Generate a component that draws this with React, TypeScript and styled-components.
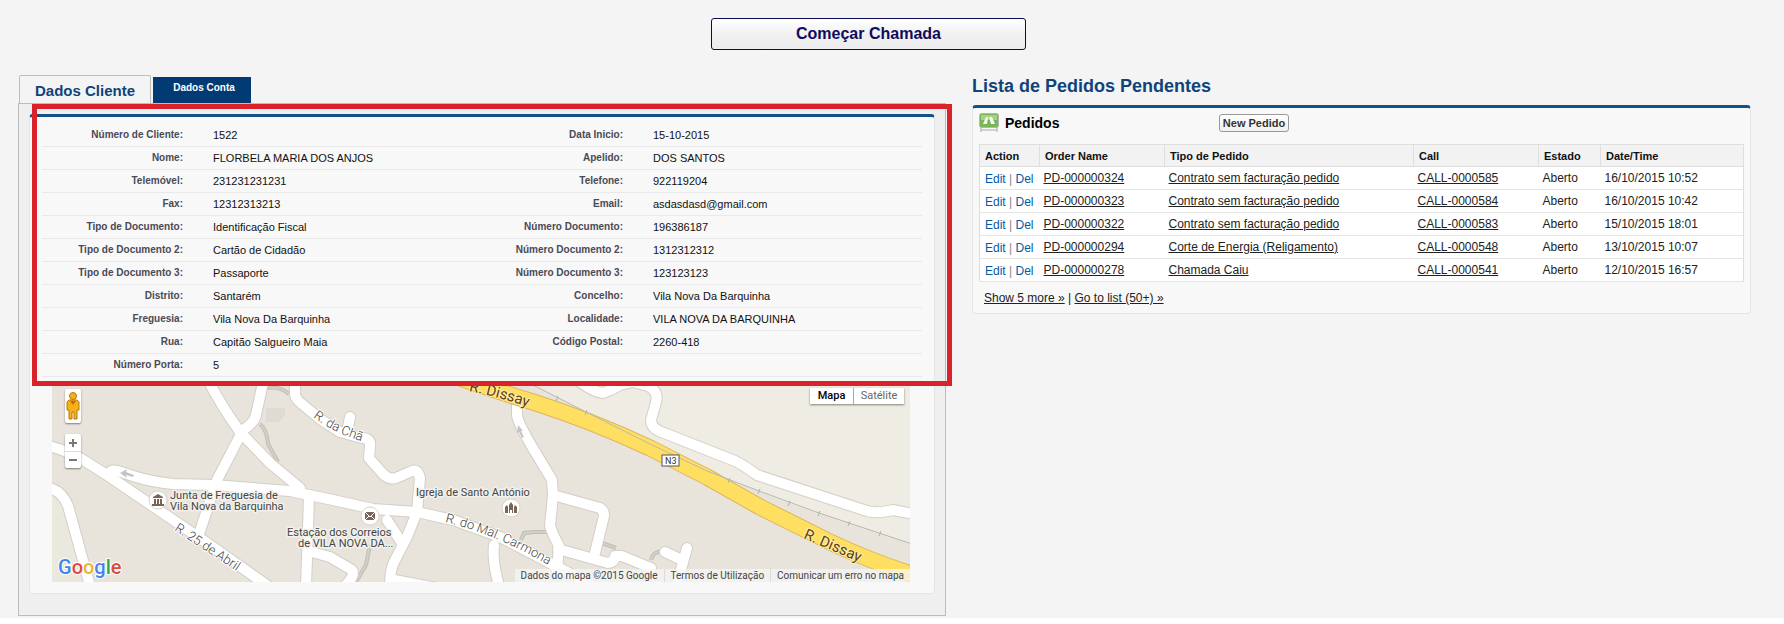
import React from "react";
import styled, { createGlobalStyle } from "styled-components";

const Global = createGlobalStyle`
  *, *::before, *::after { box-sizing: border-box; }
  body { margin: 0; background: #fff; font-family: "Liberation Sans", Arial, sans-serif; color: #222; }
  a { color: inherit; }
  h1, h2, p, dl, dd, dt { margin: 0; }
`;

const Page = styled.main`
  background: #f4f4f4;
  padding: 18px 33px 2px 18px;
`;

const CallBar = styled.div`
  display: flex;
  justify-content: center;
  padding-right: 32px;
`;

const CallButton = styled.button`
  width: 315px;
  height: 32px;
  border: 1px solid #0b0b55;
  border-radius: 3px;
  background: linear-gradient(#fff, #f1f1f1 50%, #ececee);
  color: #100b5c;
  font: bold 16px/20px "Liberation Sans", Arial, sans-serif;
  padding: 0 0 1px;
`;

const Columns = styled.div`
  display: grid;
  grid-template-columns: minmax(0, 928fr) minmax(0, 779fr);
  gap: 26px;
  padding-top: 25px;
  align-items: start;
`;

const Tabs = styled.div`
  display: flex;
  align-items: flex-end;
  gap: 2px;
  height: 28px;
  padding-left: 1px;
`;

const Tab = styled.button<{ $active?: boolean }>`
  height: ${(p) => (p.$active ? 28 : 26)}px;
  width: ${(p) => (p.$active ? 132 : 98)}px;
  border: ${(p) => (p.$active ? "1px solid #bdbdbd" : "0")};
  border-bottom: 0;
  border-radius: ${(p) => (p.$active ? "2px 2px 0 0" : "0")};
  background: ${(p) => (p.$active ? "#f4f4f4" : "#023b73")};
  color: ${(p) => (p.$active ? "#10437a" : "#fff")};
  font: bold ${(p) => (p.$active ? 15 : 10)}px/16px "Liberation Sans", Arial, sans-serif;
  padding: ${(p) => (p.$active ? "2px 0 0" : "0 0 4px 4px")};
`;

const TabPanel = styled.section`
  position: relative;
  border: 1px solid #bcbcbc;
  background: #efefef;
  padding: 10px 10px 21px;
`;

const Highlight = styled.div`
  position: absolute;
  top: 0;
  left: 13px;
  right: -7px;
  height: 282px;
  border: 5px solid #da222b;
  pointer-events: none;
`;

const Card = styled.div`
  border: 1px solid #e6e6e6;
  border-top: 3px solid #125287;
  border-radius: 4px;
  background: #f8f8f8;
`;

const DetailCard = styled(Card)`
  padding: 7px 12px 11px;
`;

const Fields = styled.dl``;

const FieldRow = styled.div`
  display: grid;
  grid-template-columns: 141px minmax(0, 299fr) 141px minmax(0, 299fr);
  height: 23px;
  border-bottom: 1px solid #e9e9e9;
  align-items: center;
`;

const FieldName = styled.dt`
  color: #4a4a56;
  font-size: 10px;
  font-weight: bold;
  line-height: 12px;
  text-align: right;
`;

const FieldValue = styled.dd`
  color: #111;
  font-size: 11px;
  line-height: 14px;
  padding-left: 30px;
`;

const MapBox = styled.div`
  position: relative;
  height: 201px;
  margin: 4px 12px 0 10px;
  overflow: hidden;
  background: #e8e4dc;
  font-family: Roboto, sans-serif;
`;

const MapDrawing = styled.svg`
  display: block;
  width: 100%;
  height: 100%;
  font-family: Roboto, sans-serif;
`;

const MapControls = styled.div`
  position: absolute;
  top: 8px;
  left: 13px;
  display: grid;
  gap: 11px;
`;

const ControlCard = styled.div`
  width: 16px;
  border-radius: 2px;
  background: #fff;
  box-shadow: 0 1px 2px rgba(0, 0, 0, 0.45);
`;

const ControlButton = styled.button<{ $tall?: boolean }>`
  display: flex;
  align-items: center;
  justify-content: center;
  width: 16px;
  height: ${(p) => (p.$tall ? 34 : 17)}px;
  border: 0;
  padding: 0;
  background: none;
  & + & { border-top: 1px solid #ddd; }
`;

const MapTypes = styled.div`
  position: absolute;
  top: 7px;
  right: 6px;
  display: flex;
  background: #fff;
  box-shadow: 0 1px 2px rgba(0, 0, 0, 0.45);
`;

const MapType = styled.button<{ $on?: boolean }>`
  height: 16px;
  width: ${(p) => (p.$on ? 43 : 51)}px;
  border: 0;
  border-left: ${(p) => (p.$on ? "0" : "1px solid #aaa")};
  padding: 0;
  background: #fff;
  color: ${(p) => (p.$on ? "#000" : "#666")};
  font: ${(p) => (p.$on ? 500 : 400)} 11px/16px Roboto, sans-serif;
`;

const MapFooter = styled.div`
  position: absolute;
  right: 0;
  bottom: 0;
  display: flex;
  background: rgba(245, 245, 245, 0.75);
  color: #444;
  font-size: 10px;
  line-height: 13px;
  & > * { padding: 0 6px; text-decoration: none; }
  & > * + * { border-left: 1px solid #dcdcdc; }
`;

const Heading = styled.h1`
  color: #10437a;
  font-size: 18px;
  line-height: 22px;
  height: 30px;
`;

const OrdersCard = styled(Card)`
  padding: 0 6px 7px;
`;

const OrdersHead = styled.div`
  display: grid;
  grid-template-columns: 240px auto;
  justify-content: start;
  align-items: center;
  height: 36px;
  padding-bottom: 6px;
`;

const OrdersTitle = styled.h2`
  display: flex;
  align-items: center;
  gap: 6px;
  color: #000;
  font-size: 14px;
  line-height: 20px;
`;

const NewButton = styled.button`
  height: 18px;
  width: 70px;
  padding: 0;
  border: 1px solid #999;
  border-radius: 3px;
  background: linear-gradient(#fff, #f0f0f0);
  color: #333;
  font: bold 11px/16px "Liberation Sans", Arial, sans-serif;
`;

const Orders = styled.table`
  width: 100%;
  table-layout: fixed;
  border-collapse: collapse;
  border: 1px solid #dedede;
  background: #fff;
  font-size: 12px;
  line-height: 14px;
  th {
    height: 22px;
    padding: 0 0 0 5px;
    border: 1px solid #dedede;
    background: #f2f2f2;
    color: #111;
    font-size: 11px;
    text-align: left;
  }
  td {
    height: 23px;
    padding: 0 0 1px 4px;
    border-bottom: 1px solid #e4e4e4;
    white-space: nowrap;
  }
`;

const Col = styled.col<{ $w?: number }>`
  width: ${(p) => (p.$w ? `${p.$w}px` : "auto")};
`;

const Actions = styled.td`
  && { padding: 1px 0 0 5px; color: #888; }
  a { color: #015ba7; text-decoration: none; }
`;

const More = styled.p`
  padding: 8px 5px 0;
  font-size: 12px;
  line-height: 16px;
`;

const fields: [string, string, string?, string?][] = [
  ["Número de Cliente:", "1522", "Data Inicio:", "15-10-2015"],
  ["Nome:", "FLORBELA MARIA DOS ANJOS", "Apelido:", "DOS SANTOS"],
  ["Telemóvel:", "231231231231", "Telefone:", "922119204"],
  ["Fax:", "12312313213", "Email:", "asdasdasd@gmail.com"],
  ["Tipo de Documento:", "Identificação Fiscal", "Número Documento:", "196386187"],
  ["Tipo de Documento 2:", "Cartão de Cidadão", "Número Documento 2:", "1312312312"],
  ["Tipo de Documento 3:", "Passaporte", "Número Documento 3:", "123123123"],
  ["Distrito:", "Santarém", "Concelho:", "Vila Nova Da Barquinha"],
  ["Freguesia:", "Vila Nova Da Barquinha", "Localidade:", "VILA NOVA DA BARQUINHA"],
  ["Rua:", "Capitão Salgueiro Maia", "Código Postal:", "2260-418"],
  ["Número Porta:", "5"],
];

const orders = [
  ["PD-000000324", "Contrato sem facturação pedido", "CALL-0000585", "16/10/2015 10:52"],
  ["PD-000000323", "Contrato sem facturação pedido", "CALL-0000584", "16/10/2015 10:42"],
  ["PD-000000322", "Contrato sem facturação pedido", "CALL-0000583", "15/10/2015 18:01"],
  ["PD-000000294", "Corte de Energia (Religamento)", "CALL-0000548", "13/10/2015 10:07"],
  ["PD-000000278", "Chamada Caiu", "CALL-0000541", "12/10/2015 16:57"],
];

const roads = [
  "M46 445L62 450L80 458L107 475L160 511L207 543L268 586",
  "M46 487Q62 490 68 506L90 586",
  "M109 476Q108 469 118 471L133 476Q152 482 173 484L213 485L290 491L333 500L373 509L417 512L453 520L500 537L550 563L590 584",
  "M207 378Q220 404 240 432L271 464L300 488",
  "M264 378L256 415Q254 423 243 430L217 480L199 534",
  "M295 378V394Q296 400 302 404L320 419L340 432L362 438Q371 438 370 446L369 458L383 474Q389 480 396 478L412 471Q418 469 420 478L417 512L407 537L394 562Q390 570 390 586",
  "M350 417L347 432",
  "M387 520L402 543",
  "M309 495L308 530L306 586",
  "M308 551L330 557L352 570Q356 575 345 586",
  "M517 402V415Q518 424 537 455L552 480L553 495L550 526Q553 535 559 546L557 572",
  "M553 495L600 508Q606 512 603 520L595 553",
  "M558 549L608 563Q614 563 615 556L622 556L651 568",
  "M687 548L677 584M665 552L682 560",
  "M494 545Q492 560 499 586",
  "M394 580L437 588",
  "M575 378Q592 392 603 393Q612 390 620 385L633 382L648 386Q659 391 656 402L651 420Q651 429 664 433L735 461Q745 466 757 475L867 511Q875 514 893 510L914 514",
];

const highway = "M455 376Q490 389 533 402Q590 420 650 448L707 477L760 507L830 542Q870 561 914 575";

const ticks = [
  [557, 398], [586, 412], [729, 480], [759, 491], [789, 503], [819, 513], [849, 523], [880, 533],
];

const Poi = ({ x, y, children }: { x: number; y: number; children: React.ReactNode }) => (
  <g transform={`translate(${x} ${y})`}>
    <circle r="9" fill="#fff" stroke="#d8d4cc" strokeWidth="1" />
    {children}
  </g>
);

const Logo = () => (
  <g
    fontFamily="Roboto, sans-serif"
    fontSize="20"
    fontWeight="500"
    stroke="#fff"
    strokeWidth="2"
    paintOrder="stroke"
  >
    <text x="58" y="574">
      <tspan fill="#4584ee">G</tspan>
      <tspan fill="#dc4b3e">o</tspan>
      <tspan fill="#edb42d">o</tspan>
      <tspan fill="#4584ee">g</tspan>
      <tspan fill="#37a257">l</tspan>
      <tspan fill="#dc4b3e">e</tspan>
    </text>
  </g>
);

const StreetMap = () => (
  <MapDrawing viewBox="52 381 858 201" preserveAspectRatio="xMinYMin slice" role="img" aria-label="Mapa">
    <path d="M52 381H910V582H52Z" fill="#e8e4dc" />
    <path d="M500 370L537 387L650 445L707 472L789 503L912 544V370Z" fill="#efece3" />
    <path d="M52 492L66 510L88 582H52Z" fill="#ebe8de" />
    <path d="M266 408H285V415L279 422H266Z" fill="#dfdbd4" />
    <g fill="none" stroke="#bfbdb4" strokeWidth="4">
      <path d="M266 388Q280 386 289 394M260 424Q267 430 268 444L278 462M521 540L524 533L535 532H548M602 543L616 548M651 560Q652 552 663 551M370 545L366 565L356 582" />
    </g>
    <g fill="none" stroke="#d3d0c7" strokeWidth="2">
      <path d="M266 388Q280 386 289 394M260 424Q267 430 268 444L278 462M521 540L524 533L535 532H548M602 543L616 548M651 560Q652 552 663 551M370 545L366 565L356 582" />
    </g>
    <g fill="none" strokeLinecap="round" strokeLinejoin="round">
      {roads.map((d) => <path key={d} d={d} stroke="#d2cfc7" strokeWidth="12" />)}
      {roads.map((d) => <path key={d} d={d} stroke="#fff" strokeWidth="10" />)}
      <path d={highway} stroke="#dcb55a" strokeWidth="17" />
      <path d={highway} stroke="#ffdf62" strokeWidth="15" />
    </g>
    <path d="M525 382L537 387L586 412L650 444L707 471L759 491L819 513L912 544" fill="none" stroke="#b9b8b2" />
    {ticks.map(([x, y]) => <path key={x} d={`M${x + 1} ${y - 2}L${x - 1} ${y + 3}`} stroke="#b0b0ac" />)}
    <g fill="#c4c4c4">
      <path d="M120 473L127 469L126 472L134 475L133 477L126 475L127 478Z" />
      <path d="M518 425L523 431L521 431L524 437L522 438L519 432L517 433Z" />
    </g>
    <Poi x={158} y={500}>
      <path d="M-5 -3L0 -6L5 -3V-2H-5ZM-4 -1H-2V4H-4ZM-1 -1H1V4H-1ZM2 -1H4V4H2ZM-6 4H6V6H-6Z" fill="#7c6358" />
    </Poi>
    <Poi x={370} y={516}>
      <path d="M-5 -4H5V4H-5Z" fill="#7c6358" />
      <path d="M-5 -4L0 1L5 -4M-5 4L-1 0M5 4L1 0" stroke="#fff" fill="none" />
    </Poi>
    <Poi x={511} y={508}>
      <path d="M-6 5V-1L-4 -3L-3 -1V5ZM6 5V-1L4 -3L3 -1V5ZM-2 5V-3L0 -6L2 -3V5H1V2H-1V5Z" fill="#7c6358" />
    </Poi>
    <g fill="#444" stroke="#f3f1ec" strokeWidth="3" strokeLinejoin="round" paintOrder="stroke" fontSize="11">
      <text x="170" y="499">Junta de Freguesia de</text>
      <text x="170" y="510">Vila Nova da Barquinha</text>
      <text x="416" y="496">Igreja de Santo António</text>
      <text x="287" y="536">Estação dos Correios</text>
      <text x="298" y="547">de VILA NOVA DA...</text>
    </g>
    <defs>
      <path id="cha" d="M313 417Q335 434 368 443" />
      <path id="abril" d="M174 530L244 576" />
      <path id="carmona" d="M445 522Q500 535 560 572" />
      <path id="dissayTop" d="M469 391Q500 397 540 411" />
      <path id="dissayEnd" d="M803 538L875 569" />
    </defs>
    <g fill="#444" stroke="#fff" strokeWidth="2" paintOrder="stroke" fontSize="13" fontWeight="300">
      <text><textPath href="#cha">R. da Chã</textPath></text>
      <text><textPath href="#abril">R. 25 de Abril</textPath></text>
      <text><textPath href="#carmona">R. do Mal. Carmona</textPath></text>
    </g>
    <g fill="#5d3d10" stroke="#ffeda6" strokeWidth="2" paintOrder="stroke" fontSize="15">
      <text><textPath href="#dissayTop">R. Dissay</textPath></text>
      <text><textPath href="#dissayEnd">R. Dissay</textPath></text>
    </g>
    <rect x="662" y="455" width="17" height="11" fill="#fff" stroke="#555" />
    <text x="665" y="464" fontSize="9" fill="#333">N3</text>
    <Logo />
  </MapDrawing>
);

const Pegman = () => (
  <svg width="14" height="30" viewBox="0 0 14 30" aria-hidden="true">
    <path d="M3 9H11L13 11V19H11V28H8V21H6V28H3V19H1V11Z" fill="#f4b216" stroke="#b9770f" strokeLinejoin="round" />
    <path d="M4 10H10L7 14Z" fill="#e0592b" />
    <circle cx="7" cy="5" r="3.5" fill="#f4b216" stroke="#b9770f" />
  </svg>
);

const OrdersIcon = () => (
  <svg width="20" height="20" viewBox="0 0 20 20" aria-hidden="true">
    <path d="M2 14V19M18 14V19M2 17H18" stroke="#a9a9a9" fill="none" />
    <rect x="0.5" y="0.5" width="19" height="14" rx="2" fill="#79b657" stroke="#b5b9b1" />
    <path d="M2 2H18V7H2Z" fill="#a4d184" />
    <path d="M4 11L7 4H9L8 11ZM10 4H13L16 11H12Z" fill="#f5fbf0" />
  </svg>
);

export default function App() {
  return (
    <>
      <Global />
      <Page>
        <CallBar>
          <CallButton type="button">Começar Chamada</CallButton>
        </CallBar>
        <Columns>
          <div>
            <Tabs role="tablist">
              <Tab $active role="tab" aria-selected="true">Dados Cliente</Tab>
              <Tab role="tab" aria-selected="false">Dados Conta</Tab>
            </Tabs>
            <TabPanel role="tabpanel">
              <DetailCard>
                <Fields>
                  {fields.map(([name, value, name2, value2]) => (
                    <FieldRow key={name}>
                      <FieldName>{name}</FieldName>
                      <FieldValue>{value}</FieldValue>
                      {name2 && <FieldName>{name2}</FieldName>}
                      {value2 && <FieldValue>{value2}</FieldValue>}
                    </FieldRow>
                  ))}
                </Fields>
                <MapBox>
                  <StreetMap />
                  <MapControls>
                    <ControlCard>
                      <ControlButton $tall type="button" aria-label="Street View"><Pegman /></ControlButton>
                    </ControlCard>
                    <ControlCard>
                      <ControlButton type="button" aria-label="Aumentar">
                        <svg width="8" height="8"><path d="M0 4H8M4 0V8" stroke="#777" strokeWidth="2" /></svg>
                      </ControlButton>
                      <ControlButton type="button" aria-label="Diminuir">
                        <svg width="8" height="8"><path d="M0 4H8" stroke="#777" strokeWidth="2" /></svg>
                      </ControlButton>
                    </ControlCard>
                  </MapControls>
                  <MapTypes>
                    <MapType $on type="button">Mapa</MapType>
                    <MapType type="button">Satélite</MapType>
                  </MapTypes>
                  <MapFooter>
                    <span>Dados do mapa ©2015 Google</span>
                    <a href="#termos">Termos de Utilização</a>
                    <a href="#erro">Comunicar um erro no mapa</a>
                  </MapFooter>
                </MapBox>
              </DetailCard>
              <Highlight />
            </TabPanel>
          </div>
          <div>
            <Heading>Lista de Pedidos Pendentes</Heading>
            <OrdersCard>
              <OrdersHead>
                <OrdersTitle><OrdersIcon />Pedidos</OrdersTitle>
                <NewButton type="button">New Pedido</NewButton>
              </OrdersHead>
              <Orders>
                <colgroup>
                  <Col $w={60} /><Col $w={125} /><Col /><Col $w={125} /><Col $w={62} /><Col $w={143} />
                </colgroup>
                <thead>
                  <tr>
                    <th>Action</th><th>Order Name</th><th>Tipo de Pedido</th><th>Call</th><th>Estado</th><th>Date/Time</th>
                  </tr>
                </thead>
                <tbody>
                  {orders.map(([id, type, call, date]) => (
                    <tr key={id}>
                      <Actions><a href="#edit">Edit</a> | <a href="#del">Del</a></Actions>
                      <td><a href="#order">{id}</a></td>
                      <td><a href="#type">{type}</a></td>
                      <td><a href="#call">{call}</a></td>
                      <td>Aberto</td>
                      <td>{date}</td>
                    </tr>
                  ))}
                </tbody>
              </Orders>
              <More><a href="#more">Show 5 more »</a> | <a href="#list">Go to list (50+) »</a></More>
            </OrdersCard>
          </div>
        </Columns>
      </Page>
    </>
  );
}
